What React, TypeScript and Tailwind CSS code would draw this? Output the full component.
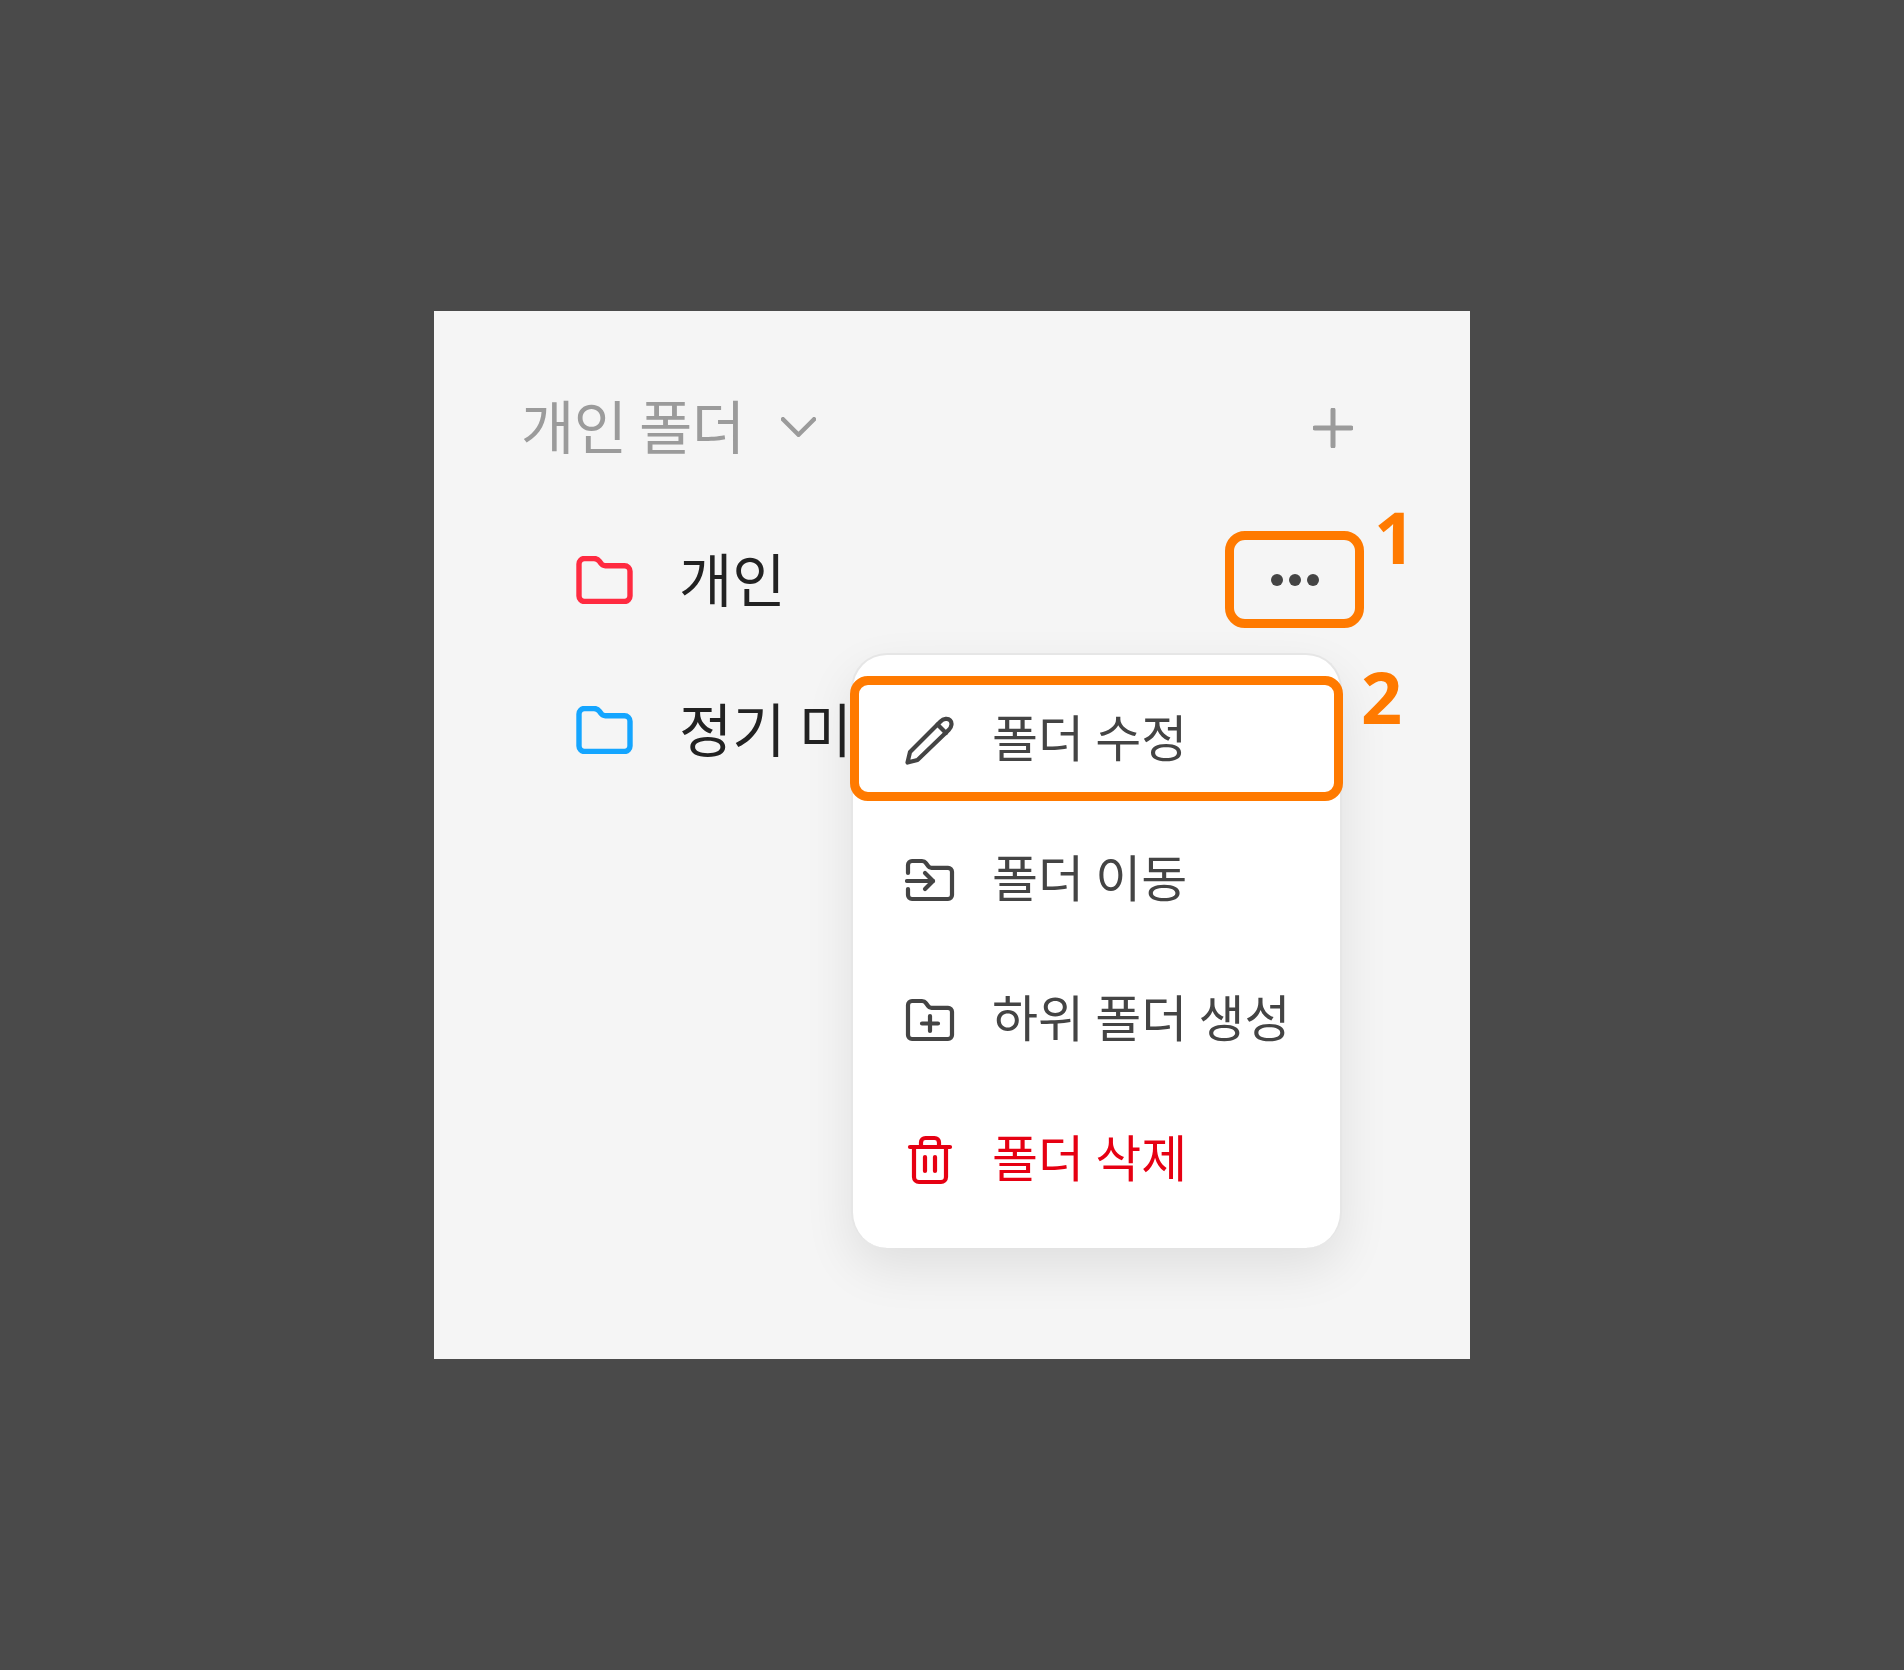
import type { ReactNode } from "react";

function FolderIcon({ className }: { className: string }) {
  return (
    <svg viewBox="0 0 56 48" fill="none" className={className}>
      <path
        d="M2.5 8a5.5 5.5 0 0 1 5.5-5.5h9.5c2.2 0 4 .9 5.3 2.6l1.9 2.6c1 1.3 2.3 2 4 2H48a5.5 5.5 0 0 1 5.5 5.5V40a5.5 5.5 0 0 1-5.5 5.5H8A5.5 5.5 0 0 1 2.5 40V8Z"
        stroke="currentColor"
        strokeWidth="5.4"
        strokeLinejoin="round"
      />
    </svg>
  );
}

function PencilIcon() {
  return (
    <svg viewBox="0 0 50 50" fill="none" className="w-[50px] h-[50px]" stroke="currentColor" strokeWidth="4.2" strokeLinejoin="round" strokeLinecap="round">
      <path d="M2.500 47.500 5 37 35.500 6.500c3-3 7.500-3.400 9.600-1.200 2.200 2.200 1.800 6.500-1.200 9.500L12.500 45 2.500 47.500Z" />
      <path d="M32.500 9.500 41 18" />
    </svg>
  );
}

function FolderMoveIcon() {
  return (
    <svg viewBox="0 0 50 44" fill="none" className="w-[50px] h-[44px]" stroke="currentColor" strokeWidth="4.2" strokeLinejoin="round" strokeLinecap="round">
      <path d="M3 15V7a4 4 0 0 1 4-4h10c1.600 0 3 .7 3.900 2l2.200 3c.8 1.200 2 1.800 3.400 1.800H43a4 4 0 0 1 4 4V37a4 4 0 0 1-4 4H7a4 4 0 0 1-4-4v-6" />
      <path d="M2 23h26" />
      <path d="M20 15l8 8-8 8" />
    </svg>
  );
}

function FolderPlusIcon() {
  return (
    <svg viewBox="0 0 50 44" fill="none" className="w-[50px] h-[44px]" stroke="currentColor" strokeWidth="4.2" strokeLinejoin="round" strokeLinecap="round">
      <path d="M3 7a4 4 0 0 1 4-4h10c1.600 0 3 .7 3.900 2l2.200 3c.8 1.200 2 1.800 3.400 1.800H43a4 4 0 0 1 4 4V37a4 4 0 0 1-4 4H7a4 4 0 0 1-4-4V7Z" />
      <path d="M25 18v15M17 25.500h16" />
    </svg>
  );
}

function TrashIcon() {
  return (
    <svg viewBox="0 0 50 50" fill="none" className="w-[50px] h-[50px]" stroke="currentColor" strokeWidth="4.2" strokeLinejoin="round" strokeLinecap="round">
      <path d="M5 12h40" />
      <path d="M16 12V7.500A4.500 4.500 0 0 1 20.500 3h9A4.500 4.500 0 0 1 34 7.500V12" />
      <path d="M9 12v30a5 5 0 0 0 5 5h22a5 5 0 0 0 5-5V12" />
      <path d="M20 22v14M30 22v14" />
    </svg>
  );
}

const menuItems: { label: string; icon: ReactNode; danger?: boolean }[] = [
  { label: "폴더 수정", icon: <PencilIcon /> },
  { label: "폴더 이동", icon: <FolderMoveIcon /> },
  { label: "하위 폴더 생성", icon: <FolderPlusIcon /> },
  { label: "폴더 삭제", icon: <TrashIcon />, danger: true },
];

export default function App() {
  return (
    <div className="flex justify-center h-[1670px] bg-[#4a4a4a] pt-[311px] font-['Noto_Sans_CJK_KR','Noto_Sans',sans-serif]">
      <div className="relative w-[1036px] h-[1048px] bg-[#f5f5f5] pt-[75px]">
        {/* Header */}
        <div className="flex items-center justify-between h-[82px] pl-[87px] pr-[117px] text-[#9b9b9b]">
          <div className="flex items-center gap-[36px]">
            <span className="text-[58px] leading-none font-normal tracking-[-0.01em] pb-[6px]">개인 폴더</span>
            <svg viewBox="0 0 36 20" fill="none" className="w-[35px] h-[20px]" stroke="currentColor" strokeWidth="4.6" strokeLinecap="round" strokeLinejoin="round">
              <path d="M2 2l16 16L34 2" />
            </svg>
          </div>
          <svg viewBox="0 0 40 40" fill="none" className="w-[40px] h-[40px] mt-[2px]" stroke="currentColor" strokeWidth="5" strokeLinecap="round">
            <path d="M20 2v36M2 20h36" />
          </svg>
        </div>

        {/* Folder list */}
        <div className="mt-[37px] flex flex-col pl-[142px] pr-[151px] text-[#222222]">
          <div className="flex items-center justify-between h-[150px]">
            <div className="flex items-center gap-[46px]">
              <FolderIcon className="w-[57px] h-[48px] text-[#ff2a40]" />
              <span className="text-[58px] leading-none font-normal pb-[6px]">개인</span>
            </div>
            <div className="flex gap-[6px]">
              <span className="w-[12px] h-[12px] rounded-full bg-[#444444]" />
              <span className="w-[12px] h-[12px] rounded-full bg-[#444444]" />
              <span className="w-[12px] h-[12px] rounded-full bg-[#444444]" />
            </div>
          </div>
          <div className="flex items-center h-[150px]">
            <div className="flex items-center gap-[46px]">
              <FolderIcon className="w-[57px] h-[48px] text-[#14a5ff]" />
              <span className="text-[58px] leading-none font-normal pb-[6px]">정기 미팅</span>
            </div>
          </div>
        </div>

        {/* Context menu */}
        <div className="absolute left-[417px] top-[342px] w-[491px] h-[595px] pt-[13px] bg-white rounded-[36px] border-2 border-[#e6e6e6] border-b-0 shadow-[0_20px_50px_rgba(0,0,0,0.09)]">
          {menuItems.map((item) => (
            <div
              key={item.label}
              className={`flex items-center gap-[37px] h-[140px] pl-[52px] ${item.danger ? "text-[#e60012]" : "text-[#444444]"}`}
            >
              <div className="flex items-center justify-center w-[50px] pt-[3px]">{item.icon}</div>
              <span className="text-[50px] leading-none font-normal whitespace-nowrap pb-[6px]">{item.label}</span>
            </div>
          ))}
        </div>

        {/* Annotations */}
        <div className="absolute left-[791px] top-[220px] w-[139px] h-[97px] border-[9px] border-[#ff7a00] rounded-[20px]" />
        <span className="absolute left-[940px] top-[189px] text-[72px] leading-none font-bold text-[#ff7a00] font-['Noto_Sans',sans-serif]">1</span>
        <div className="absolute left-[416px] top-[365px] w-[493px] h-[125px] border-[9px] border-[#ff7a00] rounded-[18px]" />
        <span className="absolute left-[927px] top-[349px] text-[72px] leading-none font-bold text-[#ff7a00] font-['Noto_Sans',sans-serif]">2</span>
      </div>
    </div>
  );
}
